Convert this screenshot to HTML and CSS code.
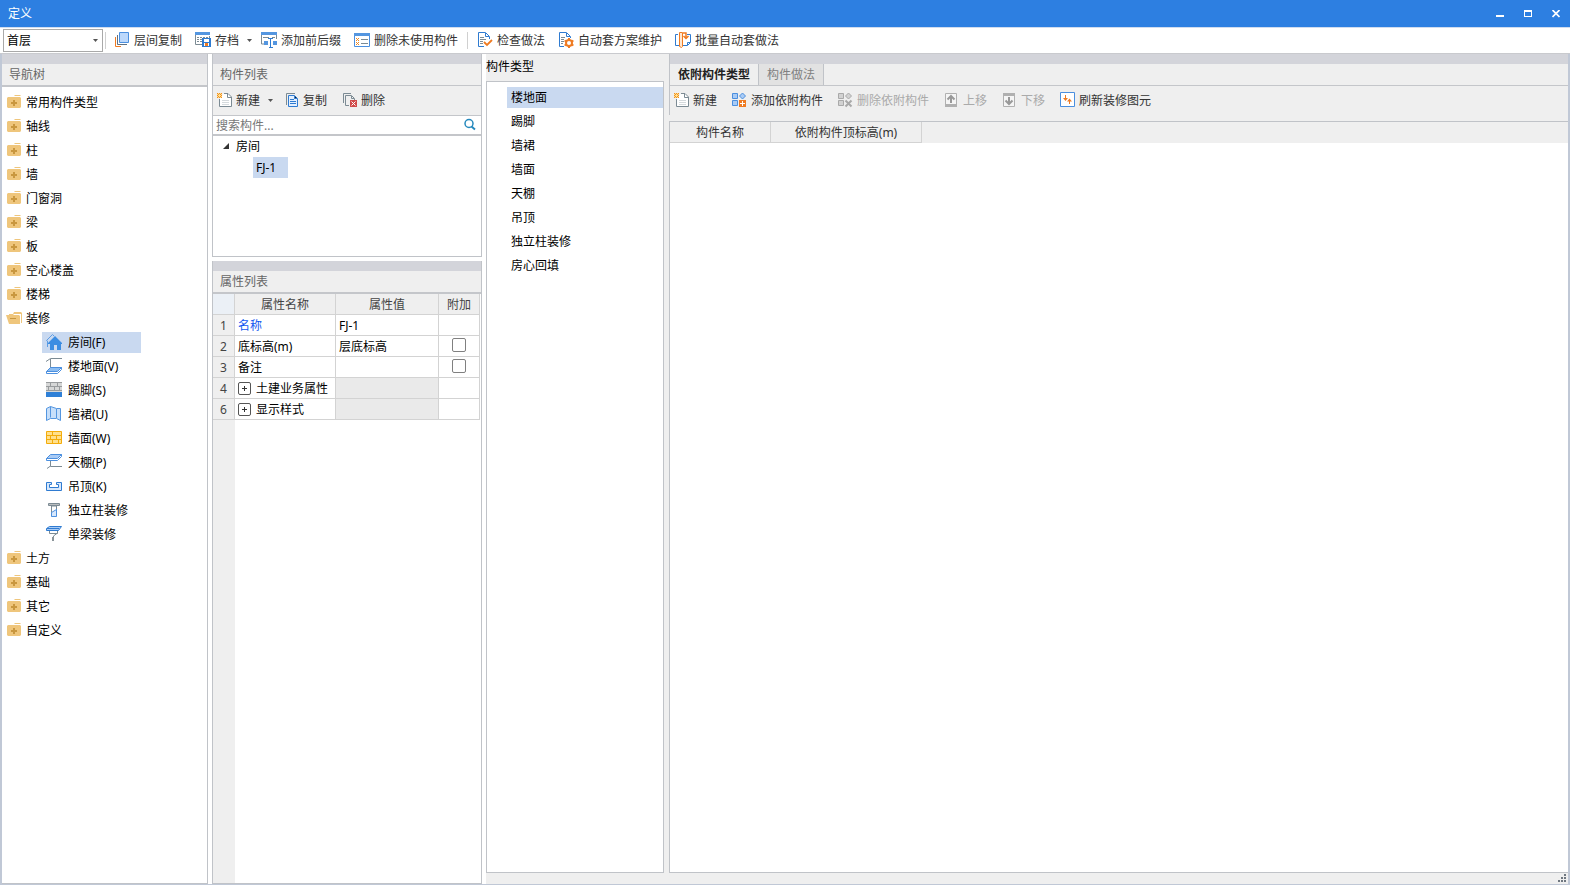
FILE: index.html
```html
<!DOCTYPE html>
<html lang="zh-CN">
<head>
<meta charset="utf-8">
<title>定义</title>
<link rel="stylesheet" href="styles.css">
</head>
<body>
<svg class="sprite" aria-hidden="true">
  <symbol id="folder" viewBox="0 0 16 16"><path fill="#efc67c" d="M1 4l1-1h12l1 1v9l-1 1H2l-1-1zM9 1h5l1 1H8z"/><path fill="#c9973f" d="M7 6h2v2h2v2H9v2H7v-2H5V8h2z"/></symbol>
  <symbol id="folder-open" viewBox="0 0 16 16"><path fill="#efc67c" d="M8 2h7l1 1v10h-1V4H8L7 5H3V4h4zM0 5h13l1 1v8H3z"/><path fill="#c9973f" d="M4 8h6v1H4z"/></symbol>
  <symbol id="new" viewBox="-1 -1 16 16"><path fill="#fff" stroke="#7c8b94" d="M7 .500h4l3.500 3.500v9.500h-12V6"/><path fill="none" stroke="#7c8b94" d="M10.500 1v3.500H14"/><path stroke="#d5dadd" d="M5 7.500h7M5 9.500h7M5 11.500h7"/><path fill="#ffe38f" d="M0 0h5v5H0z"/><path fill="#f08a24" d="M0 0h1v1H0zM2 0h1v1H2zM4 0h1v1H4zM1 1h1v1H1zM3 1h1v1H3zM0 2h1v1H0zM4 2h1v1H4zM1 3h1v1H1zM3 3h1v1H3zM0 4h1v1H0zM2 4h1v1H2zM4 4h1v1H4z"/></symbol>
  <symbol id="copy" viewBox="-2 0 16 16"><path fill="none" stroke="#7c8b94" d="M1.500 13V1.500H10"/><path fill="#e4f0ff" stroke="#2f7bd1" d="M3.500 3.500h6l3 3v8h-9z"/><path stroke="#2f7bd1" d="M5 7.500h4M5 9.500h6M5 11.500h6M9.500 4v2.500H12"/></symbol>
  <symbol id="delete" viewBox="-1 0 16 16"><path fill="none" stroke="#7c8b94" d="M1.500 11V1.500H9M7 13.500H3.500v-10h6l3 3V8M9.500 4v2.500H12"/><path fill="#d14b4b" d="M8 8h7v7H8z"/><path stroke="#fff" d="M9.500 9.500l4 4M13.500 9.500l-4 4"/></symbol>
  <symbol id="floors" viewBox="0 0 16 16"><path fill="#bcd8fb" stroke="#4b8fdf" d="M5.500.500h9v10h-9z"/><path fill="none" stroke="#5d7184" d="M3.500 3v9.500H13"/><path fill="none" stroke="#ef7b22" d="M1.500 5v9.500H7"/></symbol>
  <symbol id="archive" viewBox="0 0 16 16"><path fill="#fff" stroke="#7c8b94" d="M.500 1v11.500H7M14.500 4v3"/><path fill="#5496e0" d="M0 0h15v3H0z"/><path stroke="#7c8b94" stroke-dasharray="2 1" d="M2 5.500h11M2 7.500h5M2 9.500h5"/><path fill="#2f7bd1" d="M7 6h9v9H7z"/><path fill="#fff" d="M9 7h5v3H9zM9 11h5v3H9z"/><path fill="#ef7b22" d="M10 11h3v3h-3z"/></symbol>
  <symbol id="affix" viewBox="0 0 16 16"><path fill="#fff" stroke="#7c8b94" d="M.500 1v11H3M15.500 3v4"/><path fill="#5496e0" d="M0 0h16v3H0zM3 9h4v4H3zM12 9h4v4h-4z"/><path stroke="#7c8b94" d="M2 5.500h6M11 5.500h3"/><path fill="none" stroke="#2f7bd1" d="M7 6.500h5M9.500 7v8M8 15.500h4"/></symbol>
  <symbol id="unused" viewBox="0 0 16 16"><path fill="#fff" stroke="#4b8fdf" d="M.500 1.500h15v13H.500z"/><path fill="#5496e0" d="M0 1h16v3H0z"/><path stroke="#ef8a24" d="M2 6l3 3M5 6L2 9M2 10l3 3M5 10l-3 3"/><path stroke="#7c8b94" d="M7 7.500h7M7 11.500h7"/></symbol>
  <symbol id="check" viewBox="0 0 16 16"><path fill="#fff" stroke="#2f7bd1" d="M7 14.500H1.500V.500h7l4 4V7"/><path fill="none" stroke="#2f7bd1" d="M8.500 1v3.500H12"/><path stroke="#7c8b94" d="M3 5.500h4M3 7.500h6M3 9.500h3M3 11.500h3"/><path fill="none" stroke="#ef7b22" stroke-width="1.800" d="M7 10l3 3 5-5"/></symbol>
  <symbol id="gear" viewBox="0 0 16 16"><path fill="#fff" stroke="#2f7bd1" d="M6 14.500H1.500V.500h7l4 4V6"/><path fill="none" stroke="#2f7bd1" d="M8.500 1v3.500H12"/><path stroke="#7c8b94" d="M3 5.500h4M3 7.500h3M3 9.500h3M3 11.500h2"/><circle cx="11" cy="11" r="3" fill="none" stroke="#ef7b22" stroke-width="2"/><path stroke="#ef7b22" stroke-width="2" d="M11 6v2M11 14v2M6.600 8.500l1.700 1M13.700 12.500l1.700 1M6.600 13.500l1.700-1M13.700 9.500l1.700-1"/></symbol>
  <symbol id="batch" viewBox="0 0 16 16"><path fill="#fff" stroke="#2f7bd1" d="M3 2.500H.500v11H4M12 2.500h3.500v8l-3 3H8"/><path fill="none" stroke="#2f7bd1" d="M12.500 13v-2.500H15"/><path fill="#ffe6cf" stroke="#ef7b22" d="M4.500.500h3v14l-1 1-2-1z"/><path fill="none" stroke="#ef7b22" stroke-width="1.500" d="M8 1h3v5M8.500 4L11 6.500 13.500 4"/></symbol>
  <symbol id="add-part" viewBox="0 0 16 16"><path fill="#a9cbf5" stroke="#4b8fdf" d="M1.500 1.500h5v5h-5zM1.500 8.500h5v5h-5zM11.500 1l3 3-3 3-3-3z"/><path fill="#ef7b22" d="M8 8h7v7H8z"/><path stroke="#fff" d="M9 11.500h5M11.500 9v5"/></symbol>
  <symbol id="del-part" viewBox="0 0 16 16"><path fill="#d2d2d2" stroke="#a9a9a9" d="M1.500 1.500h5v5h-5zM1.500 8.500h5v5h-5zM11.500 1l3 3-3 3-3-3z"/><path stroke="#a9a9a9" stroke-width="2" d="M8.500 8.500l6 6M14.500 8.500l-6 6"/></symbol>
  <symbol id="up" viewBox="0 0 16 16"><path fill="#f5f5f5" stroke="#b0b0b0" d="M2.500 1.500h11v12h-11z"/><path fill="#b0b0b0" d="M2 12h12v3H2z"/><path fill="none" stroke="#999" stroke-width="2" d="M8 11V4M4.500 7.500L8 4l3.500 3.500"/></symbol>
  <symbol id="down" viewBox="0 0 16 16"><path fill="#f5f5f5" stroke="#b0b0b0" d="M2.500 1.500h11v13h-11z"/><path fill="#b0b0b0" d="M2 1h12v3H2z"/><path fill="none" stroke="#999" stroke-width="2" d="M8 5v7M4.500 8.500L8 12l3.500-3.500"/></symbol>
  <symbol id="refresh" viewBox="0 0 16 16"><path fill="#fff" stroke="#4b8fdf" d="M1.500.500h14v14h-14z"/><path fill="none" stroke="#ef7b22" d="M6.500 3v5M10.500 12V7"/><path fill="#ef7b22" d="M4 6h5L6.500 9zM8 9.500h5L10.500 6.500z"/></symbol>
  <symbol id="search" viewBox="0 0 16 16"><circle cx="7" cy="6.500" r="4" fill="none" stroke="#2589bd" stroke-width="1.500"/><path stroke="#2589bd" stroke-width="2" d="M9.500 9.500l3.500 3"/></symbol>
  <symbol id="arrow" viewBox="0 0 5 3"><path fill="#555" d="M0 0h5L2.500 3z"/></symbol>
  <symbol id="room" viewBox="0 0 16 16"><path fill="none" stroke="#5c9de5" d="M1.500 13V7L.500 6.500l6-6L8 2"/><path fill="#3b8de2" d="M2 9l7-7 7 7v1h-1v6h-4v-5H8v5H4v-6H2z"/></symbol>
  <symbol id="floor" viewBox="0 0 16 16"><path fill="none" stroke="#7c8b94" d="M0 3.500L4.500.500H16M4.500 1v9"/><path fill="#8cbdf2" stroke="#4b8fdf" d="M4.500 9.500h11l-4 4H.500z"/><path fill="#fff" stroke="#4b8fdf" d="M.500 13.500h11l4-4v2l-4 4H.500z"/></symbol>
  <symbol id="skirting" viewBox="0 0 16 16"><path fill="#d6d7d7" d="M0 0h16v10H0z"/><path fill="none" stroke="#989b9d" d="M0 .500h16M0 4.500h16M0 8.500h16M4.500 0v4M11.500 0v4M8.500 4v4M2.500 4v4M13.500 4v4"/><path fill="#2f80d7" d="M0 10h16v5H0z"/></symbol>
  <symbol id="dado" viewBox="0 0 16 16"><path fill="#c7dffa" stroke="#5496e0" d="M.500 2.500l4-2 6 2h4v12l-4-2h-6l-4 2zM4.500.500v11M10.500 3v9"/></symbol>
  <symbol id="wall" viewBox="0 0 16 16"><path fill="#ffe08d" stroke="#f3ac0b" d="M.500 1.500h15v12H.500zM0 5.500h16M0 9.500h16M6.500 1v4M10.500 5v4M4.500 5v4M6.500 9v4M12.500 9v4"/></symbol>
  <symbol id="ceiling" viewBox="0 0 16 16"><path fill="#a9cbf5" stroke="#4b8fdf" d="M4.500.500h11l-4 4H.500z"/><path fill="#fff" stroke="#4b8fdf" d="M.500 4.500h11l4-4v2l-4 4H.500z"/><path fill="none" stroke="#7c8b94" d="M4.500 7v5.500H16M4.500 12L1 14.500"/></symbol>
  <symbol id="suspended" viewBox="0 0 16 16"><path fill="#d7e8fc" stroke="#2f7bd1" d="M.500 4.500h5v2h-2v3h9v-3h-2v-2h5v8H.500z"/></symbol>
  <symbol id="column" viewBox="0 0 16 16"><path fill="#b9bdbf" stroke="#7c8b94" d="M2.500 1.500h11v2h-11z"/><path fill="#fff" stroke="#7c8b94" d="M5.500 4v10h5V4z"/><path fill="#d7e8fc" stroke="#4b8fdf" d="M5.500 10.500l5-3v7h-5z"/></symbol>
  <symbol id="beam" viewBox="0 0 16 16"><path fill="#a9cbf5" stroke="#2f7bd1" d="M3.500.500h12l-3 4H.500v-2z"/><path stroke="#2f7bd1" d="M1 2.500h12"/><path fill="none" stroke="#7c8b94" d="M3.500 5v2.500h8V5M11.500 7l-4 3v2"/><path fill="#8a9499" d="M6 11h2v4H6z"/></symbol>
  <symbol id="tree-open" viewBox="0 0 8 8"><path fill="#333" d="M7 1v6H1z"/></symbol>
</svg>

<div class="window">
  <header class="titlebar">
    <h1>定义</h1>
    <button aria-label="最小化"><svg viewBox="0 0 8 8"><path fill="#fff" d="M0 5h8v2H0z"/></svg></button>
    <button aria-label="最大化"><svg viewBox="0 0 8 8"><path fill="#fff" fill-rule="evenodd" d="M0 0h8v7H0zM1 2v4h6V2z"/></svg></button>
    <button aria-label="关闭"><svg viewBox="0 0 8 8"><path stroke="#fff" stroke-width="1.700" d="M.500 0l7 7M7.500 0l-7 7"/></svg></button>
  </header>

  <div class="toolbar main-bar">
    <span class="combo"><select aria-label="楼层"><option>首层</option></select><svg class="arrow"><use href="#arrow"/></svg></span>
    <span class="sep"></span>
    <button><svg class="icon"><use href="#floors"/></svg>层间复制</button>
    <button class="has-menu"><svg class="icon"><use href="#archive"/></svg>存档<svg class="arrow"><use href="#arrow"/></svg></button>
    <button><svg class="icon"><use href="#affix"/></svg>添加前后缀</button>
    <button><svg class="icon"><use href="#unused"/></svg>删除未使用构件</button>
    <span class="sep"></span>
    <button><svg class="icon"><use href="#check"/></svg>检查做法</button>
    <button><svg class="icon"><use href="#gear"/></svg>自动套方案维护</button>
    <button><svg class="icon"><use href="#batch"/></svg>批量自动套做法</button>
  </div>

  <main class="workspace">
    <nav class="nav-panel">
      <h2 class="panel-title thick">导航树</h2>
      <ul class="nav-tree">
        <li><button><svg class="icon"><use href="#folder"/></svg>常用构件类型</button></li>
        <li><button><svg class="icon"><use href="#folder"/></svg>轴线</button></li>
        <li><button><svg class="icon"><use href="#folder"/></svg>柱</button></li>
        <li><button><svg class="icon"><use href="#folder"/></svg>墙</button></li>
        <li><button><svg class="icon"><use href="#folder"/></svg>门窗洞</button></li>
        <li><button><svg class="icon"><use href="#folder"/></svg>梁</button></li>
        <li><button><svg class="icon"><use href="#folder"/></svg>板</button></li>
        <li><button><svg class="icon"><use href="#folder"/></svg>空心楼盖</button></li>
        <li><button><svg class="icon"><use href="#folder"/></svg>楼梯</button></li>
        <li><button><svg class="icon"><use href="#folder-open"/></svg>装修</button>
          <ul class="nav-children">
            <li><button class="selected"><svg class="icon"><use href="#room"/></svg>房间(F)</button></li>
            <li><button><svg class="icon"><use href="#floor"/></svg>楼地面(V)</button></li>
            <li><button><svg class="icon"><use href="#skirting"/></svg>踢脚(S)</button></li>
            <li><button><svg class="icon"><use href="#dado"/></svg>墙裙(U)</button></li>
            <li><button><svg class="icon"><use href="#wall"/></svg>墙面(W)</button></li>
            <li><button><svg class="icon"><use href="#ceiling"/></svg>天棚(P)</button></li>
            <li><button><svg class="icon"><use href="#suspended"/></svg>吊顶(K)</button></li>
            <li><button><svg class="icon"><use href="#column"/></svg>独立柱装修</button></li>
            <li><button><svg class="icon"><use href="#beam"/></svg>单梁装修</button></li>
          </ul>
        </li>
        <li><button><svg class="icon"><use href="#folder"/></svg>土方</button></li>
        <li><button><svg class="icon"><use href="#folder"/></svg>基础</button></li>
        <li><button><svg class="icon"><use href="#folder"/></svg>其它</button></li>
        <li><button><svg class="icon"><use href="#folder"/></svg>自定义</button></li>
      </ul>
    </nav>

    <div class="component-column">
      <section class="component-panel">
        <h2 class="panel-title">构件列表</h2>
        <div class="toolbar panel-bar">
          <button class="has-menu"><svg class="icon"><use href="#new"/></svg>新建<svg class="arrow"><use href="#arrow"/></svg></button>
          <button><svg class="icon"><use href="#copy"/></svg>复制</button>
          <button><svg class="icon"><use href="#delete"/></svg>删除</button>
        </div>
        <label class="search"><input type="text" placeholder="搜索构件..." aria-label="搜索构件"><svg class="icon"><use href="#search"/></svg></label>
        <ul class="component-tree">
          <li><button><svg class="twisty"><use href="#tree-open"/></svg>房间</button>
            <ul><li><button class="selected">FJ-1</button></li></ul>
          </li>
        </ul>
      </section>

      <section class="property-panel">
        <h2 class="panel-title thick">属性列表</h2>
        <div class="property-area">
          <table class="properties">
            <colgroup><col class="c-num"><col class="c-name"><col class="c-value"><col class="c-extra"></colgroup>
            <thead><tr><th class="corner"></th><th>属性名称</th><th>属性值</th><th>附加</th></tr></thead>
            <tbody>
              <tr><th>1</th><td class="link">名称</td><td>FJ-1</td><td></td></tr>
              <tr><th>2</th><td>底标高(m)</td><td>层底标高</td><td class="tick"><input type="checkbox" aria-label="附加底标高"></td></tr>
              <tr><th>3</th><td>备注</td><td></td><td class="tick"><input type="checkbox" aria-label="附加备注"></td></tr>
              <tr><th>4</th><td><button class="expand"><svg viewBox="0 0 13 13"><rect x=".5" y=".5" width="12" height="12" rx="1.500" fill="none" stroke="#555"/><path stroke="#333" d="M4 6.500h5M6.500 4v5"/></svg>土建业务属性</button></td><td class="blank"></td><td></td></tr>
              <tr><th>6</th><td><button class="expand"><svg viewBox="0 0 13 13"><rect x=".5" y=".5" width="12" height="12" rx="1.500" fill="none" stroke="#555"/><path stroke="#333" d="M4 6.500h5M6.500 4v5"/></svg>显示样式</button></td><td class="blank"></td><td></td></tr>
            </tbody>
          </table>
        </div>
      </section>
    </div>

    <section class="type-panel">
      <h2>构件类型</h2>
      <ul class="type-list">
        <li><button class="selected">楼地面</button></li>
        <li><button>踢脚</button></li>
        <li><button>墙裙</button></li>
        <li><button>墙面</button></li>
        <li><button>天棚</button></li>
        <li><button>吊顶</button></li>
        <li><button>独立柱装修</button></li>
        <li><button>房心回填</button></li>
      </ul>
    </section>

    <section class="detail-panel">
      <div class="detail-head">
        <div class="tabs" role="tablist">
          <button role="tab" aria-selected="true" class="active">依附构件类型</button>
          <button role="tab" aria-selected="false">构件做法</button>
        </div>
        <div class="toolbar panel-bar">
          <button><svg class="icon"><use href="#new"/></svg>新建</button>
          <button><svg class="icon"><use href="#add-part"/></svg>添加依附构件</button>
          <button disabled><svg class="icon"><use href="#del-part"/></svg>删除依附构件</button>
          <button disabled><svg class="icon"><use href="#up"/></svg>上移</button>
          <button disabled><svg class="icon"><use href="#down"/></svg>下移</button>
          <button><svg class="icon"><use href="#refresh"/></svg>刷新装修图元</button>
        </div>
      </div>
      <div class="detail-table">
        <table>
          <colgroup><col class="d-name"><col class="d-height"><col></colgroup>
          <thead><tr><th>构件名称</th><th>依附构件顶标高(m)</th><td></td></tr></thead>
        </table>
      </div>
      <svg class="grip" viewBox="0 0 8 8" aria-hidden="true"><path fill="#6f7780" d="M6 0h2v2H6zM3 3h2v2H3zM6 3h2v2H6zM0 6h2v2H0zM3 6h2v2H3zM6 6h2v2H6z"/></svg>
    </section>
  </main>
</div>
</body>
</html>
```
FILE: styles.css
```css
* { box-sizing: border-box; }

body {
  margin: 0;
  background: #fff;
  color: #000;
  font: 12px/20px "Noto Sans", "Noto Sans CJK SC", sans-serif;
}

h1, h2, ul { margin: 0; padding: 0; font-size: 12px; font-weight: 400; list-style: none; }

button, input, select { font: inherit; color: inherit; }

button {
  display: flex;
  align-items: center;
  margin: 0;
  padding: 0;
  border: 0;
  background: none;
  white-space: nowrap;
}

svg { display: block; flex: none; }
.sprite { position: absolute; width: 0; height: 0; }
.icon { width: 16px; height: 16px; margin-bottom: 1px; }
.arrow { width: 5px; height: 3px; }
.selected { background: #c9d9f0; }

.window { display: flex; flex-direction: column; min-height: 100vh; }

/* Title bar */
.titlebar {
  display: flex;
  align-items: center;
  height: 27px;
  padding-left: 8px;
  background: #2d7fe1;
  color: #fff;
}
.titlebar h1 { flex: 1; }
.titlebar button { justify-content: center; width: 28px; height: 26px; }
.titlebar svg { width: 8px; height: 8px; }

/* Toolbars */
.toolbar { display: flex; align-items: center; color: #333; }
.toolbar button { gap: 4px; height: 21px; }
.toolbar button .arrow { margin: 0 0 0 4px; }
.toolbar .has-menu { margin-right: -4px; }
.toolbar button:disabled { color: #aaa; }

.main-bar {
  gap: 5px;
  height: 27px;
  padding-left: 3px;
  border-top: 1px solid #cfdcef;
  border-bottom: 1px solid #c9cace;
}
.main-bar button { padding: 0 4px; }
.sep { width: 1px; height: 17px; background: #d0d0d0; }
.main-bar .combo + .sep { margin: 0 -1px 0 -3px; }

.combo { display: flex; align-items: center; width: 100px; height: 23px; border: 1px solid #a9a9a9; }
.combo select {
  flex: 1;
  height: 21px;
  padding: 0 3px;
  border: 0;
  background: #fff;
  color: #000;
  appearance: none;
}
.combo .arrow { margin: 0 4px; }

.panel-bar { gap: 14px; height: 29px; padding-left: 3px; background: #efefef; }

/* Panels */
.workspace {
  flex: 1;
  display: grid;
  grid-template-columns: 206px 270px 178px minmax(0, 1fr);
  column-gap: 4px;
  border: solid #c0c8d6;
  border-width: 0 2px 1px;
}

.panel-title {
  height: 32px;
  padding: 0 7px;
  border-top: 10px solid #d3d4da;
  border-bottom: 1px solid #c4c6ca;
  background: #efefef;
  color: #666;
  line-height: 21px;
}
.panel-title.thick { height: 33px; border-bottom-width: 2px; }

.nav-panel { border-right: 1px solid #c0c3c8; border-bottom: 1px solid #c0c3c8; }
.nav-tree { display: flex; flex-direction: column; gap: 3px; padding: 5px 4px; }
.nav-tree button { gap: 4px; height: 21px; }
.nav-tree .nav-children { display: flex; flex-direction: column; gap: 3px; padding: 3px 0 0 36px; }
.nav-tree .nav-children button { gap: 6px; min-width: 99px; padding: 0 4px; }

.component-column { display: flex; flex-direction: column; gap: 4px; }
.component-panel, .property-panel { border: solid #c0c3c8; border-width: 0 1px 1px; }

.search {
  display: flex;
  align-items: center;
  height: 21px;
  padding: 0 3px;
  border-top: 1px solid #c4c6ca;
  border-bottom: 2px solid #c4c6ca;
}
.search input { flex: 1; min-width: 0; height: 18px; padding: 2px 0 0; border: 0; background: none; outline: 0; }
.search input::placeholder { color: #777; opacity: 1; }

.component-tree { min-height: 120px; padding-left: 9px; }
.component-tree button { gap: 6px; height: 21px; }
.component-tree ul { padding-left: 31px; }
.component-tree .selected { min-width: 35px; padding: 0 3px; }
.twisty { width: 8px; height: 8px; margin-bottom: 1px; }

/* Property table */
.property-panel { flex: 1; display: flex; flex-direction: column; }
.property-area { flex: 1; background: linear-gradient(to right, #efefef 22px, #fff 22px); }
.properties { width: 267px; border-collapse: separate; border-spacing: 0; table-layout: fixed; }
.c-num { width: 22px; }
.c-name { width: 101px; }
.c-value { width: 103px; }
.c-extra { width: 41px; }
.properties th, .properties td {
  height: 21px;
  padding: 1px 3px 0;
  border: solid #d3d3d3;
  border-width: 0 1px 1px 0;
  background: #fff;
  line-height: 19px;
  white-space: nowrap;
}
.properties th { padding: 1px 0 0; background: #efefef; color: #444; font-weight: 400; text-align: center; }
.properties .corner { background: #ebf0f6; }
.properties .link { color: #1258f0; }
.properties .blank { background: #eaeaea; }
.properties .tick input {
  display: block;
  width: 14px;
  height: 14px;
  margin: 0 10px 3px;
  border: 1px solid #808080;
  border-radius: 2px;
  background: #fff;
  appearance: none;
}
.properties .tick input:checked { background: #2d7fe1; }
.expand { gap: 5px; height: 19px; }
.expand svg { width: 13px; height: 13px; }

/* Component types */
.type-panel { display: flex; flex-direction: column; padding-bottom: 11px; background: #efefef; }
.type-panel h2 { height: 27px; line-height: 25px; }
.type-list {
  flex: 1;
  display: flex;
  flex-direction: column;
  gap: 3px;
  padding: 5px 0 5px 20px;
  border: 1px solid #c0c3c8;
  background: #fff;
}
.type-list button { width: 100%; height: 21px; padding: 0 4px; }

/* Attached components */
.detail-panel { position: relative; display: flex; flex-direction: column; margin-left: -4px; padding: 0 0 11px 5px; background: #efefef; }
.detail-head { margin-bottom: 6px; border-left: 1px solid #c0c3c8; }
.tabs { display: flex; height: 32px; border-top: 10px solid #d3d4da; border-bottom: 1px solid #c4c6ca; }
.tabs button { padding: 0 8px; border-right: 1px solid #c0c3c8; background: #e2e2e2; color: #808080; }
.tabs .active { background: #efefef; color: #222; font-weight: 700; }
.detail-table { flex: 1; border: solid #c0c3c8; border-width: 1px 0 1px 1px; background: #fff; }
.detail-table table { width: 100%; border-spacing: 0; table-layout: fixed; }
.d-name { width: 101px; }
.d-height { width: 151px; }
.detail-table th, .detail-table td { height: 21px; padding: 1px 0 0; background: #efefef; line-height: 19px; }
.detail-table th { border: solid #d3d3d3; border-width: 0 1px 1px 0; color: #333; font-weight: 400; }
.grip { position: absolute; right: 2px; bottom: 2px; width: 8px; height: 8px; }
```
